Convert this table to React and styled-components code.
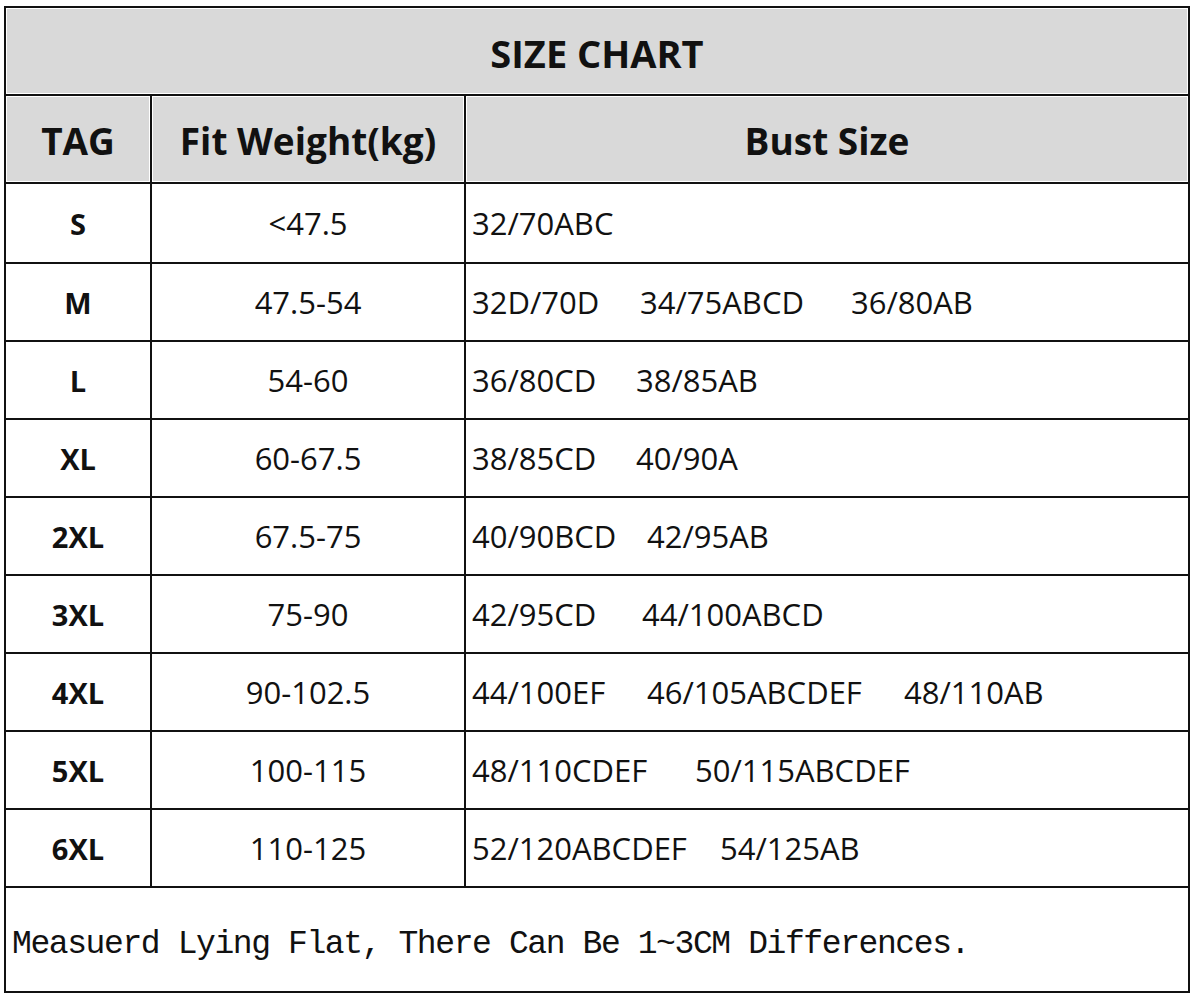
import React from "react";
import styled, { createGlobalStyle } from "styled-components";

const GlobalStyle = createGlobalStyle`
  html, body {
    margin: 0;
    padding: 0;
    background: #ffffff;
  }
  body {
    font-family: "Open Sans", "Liberation Sans", sans-serif;
    color: #111;
  }
`;

const Page = styled.div`
  padding: 6px 0 0 4px;
  width: 1196px;
  height: 1000px;
  box-sizing: border-box;
`;

const Sheet = styled.table`
  border-collapse: collapse;
  width: 1186px;
  table-layout: fixed;
`;

const Row = styled.tr`
  height: ${(p) => p.$h}px;
`;

const Cell = styled.td`
  border: 2px solid #111;
  padding: 0;
  vertical-align: middle;
`;

const TitleCell = styled(Cell)`
  background: #d9d9d9;
  box-shadow: inset 0 0 0 1px #fff;
  text-align: center;
  font-weight: 700;
  font-size: 38px;
  padding-top: 4px;
`;

const HeadCell = styled(Cell)`
  background: #d9d9d9;
  box-shadow: inset 0 0 0 1px #fff;
  text-align: center;
  font-weight: 700;
  font-size: 37px;
  padding-top: 3px;
`;

const TagCell = styled(Cell)`
  text-align: center;
  font-weight: 700;
  font-size: 29px;
`;

const WeightCell = styled(Cell)`
  text-align: center;
  font-size: 31px;
`;

const BustCell = styled(Cell)`
  font-size: 31px;
  padding-left: 6px;
  white-space: nowrap;
`;

const Size = styled.span`
  display: inline-block;
  width: ${(p) => (p.$w ? `${p.$w}px` : "auto")};
`;

const NoteCell = styled(Cell)`
  font-family: "Liberation Mono", "DejaVu Sans Mono", monospace;
  font-size: 33px;
  letter-spacing: -1.4px;
  padding: 9px 0 0 6px;
  white-space: pre;
`;

const rows = [
  { tag: "S", weight: "<47.5", bust: [["32/70ABC"]], h: 80 },
  { tag: "M", weight: "47.5-54", bust: [["32D/70D", 168], ["34/75ABCD", 211], ["36/80AB"]] },
  { tag: "L", weight: "54-60", bust: [["36/80CD", 164], ["38/85AB"]] },
  { tag: "XL", weight: "60-67.5", bust: [["38/85CD", 164], ["40/90A"]] },
  { tag: "2XL", weight: "67.5-75", bust: [["40/90BCD", 175], ["42/95AB"]] },
  { tag: "3XL", weight: "75-90", bust: [["42/95CD", 170], ["44/100ABCD"]] },
  { tag: "4XL", weight: "90-102.5", bust: [["44/100EF", 175], ["46/105ABCDEF", 257], ["48/110AB"]] },
  { tag: "5XL", weight: "100-115", bust: [["48/110CDEF", 223], ["50/115ABCDEF"]] },
  { tag: "6XL", weight: "110-125", bust: [["52/120ABCDEF", 248], ["54/125AB"]] },
];

export default function App() {
  return (
    <Page>
      <GlobalStyle />
      <Sheet>
        <colgroup>
          <col style={{ width: 146 }} />
          <col style={{ width: 314 }} />
          <col />
        </colgroup>
        <tbody>
          <Row $h={88}>
            <TitleCell colSpan={3}>SIZE CHART</TitleCell>
          </Row>
          <Row $h={88}>
            <HeadCell>TAG</HeadCell>
            <HeadCell>Fit Weight(kg)</HeadCell>
            <HeadCell>Bust Size</HeadCell>
          </Row>
          {rows.map((r) => (
            <Row key={r.tag} $h={r.h || 78}>
              <TagCell>{r.tag}</TagCell>
              <WeightCell>{r.weight}</WeightCell>
              <BustCell>
                {r.bust.map(([label, w]) => (
                  <Size key={label} $w={w}>
                    {label}
                  </Size>
                ))}
              </BustCell>
            </Row>
          ))}
          <Row $h={105}>
            <NoteCell colSpan={3}>Measuerd Lying Flat, There Can Be 1~3CM Differences.</NoteCell>
          </Row>
        </tbody>
      </Sheet>
    </Page>
  );
}
